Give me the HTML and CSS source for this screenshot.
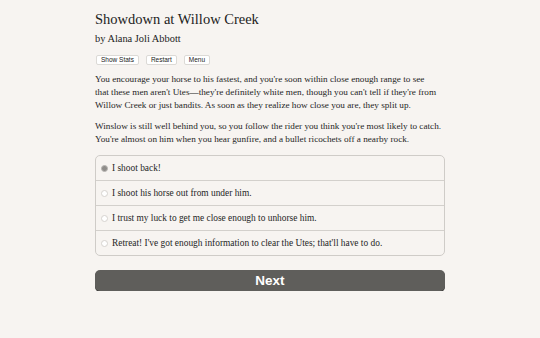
FILE: index.html
```html
<!DOCTYPE html>
<html>
<head>
<meta charset="utf-8">
<link rel="stylesheet" href="styles.css">
</head>
<body>
<main class="page">
  <h1 class="title">Showdown at Willow Creek</h1>
  <h2 class="author">by Alana Joli Abbott</h2>
  <div class="toolbar">
    <button class="tool">Show Stats</button>
    <button class="tool">Restart</button>
    <button class="tool">Menu</button>
  </div>
  <p class="para">You encourage your horse to his fastest, and you're soon within close enough range to see<br>that these men aren't Utes—they're definitely white men, though you can't tell if they're from<br>Willow Creek or just bandits. As soon as they realize how close you are, they split up.</p>
  <p class="para">Winslow is still well behind you, so you follow the rider you think you're most likely to catch.<br>You're almost on him when you hear gunfire, and a bullet ricochets off a nearby rock.</p>
  <div class="choices">
    <label class="choice"><span class="radio checked"></span>I shoot back!</label>
    <label class="choice"><span class="radio"></span>I shoot his horse out from under him.</label>
    <label class="choice"><span class="radio"></span>I trust my luck to get me close enough to unhorse him.</label>
    <label class="choice"><span class="radio"></span>Retreat! I've got enough information to clear the Utes; that'll have to do.</label>
  </div>
  <button class="next">Next</button>
</main>
</body>
</html>
```
FILE: styles.css
```css
html, body {
  margin: 0;
  padding: 0;
  background: #f7f4f1;
}
body {
  font-family: "Liberation Serif", "Times New Roman", serif;
  color: #2b2b2b;
}
.page {
  width: 350px;
  margin: 0 auto;
  padding-top: 9px;
}
.title {
  margin: 0;
  font-weight: normal;
  font-size: 14.5px;
  line-height: 20px;
  color: #222;
}
.author {
  margin: 2px 0 0;
  font-weight: normal;
  font-size: 10.4px;
  line-height: 16px;
  color: #222;
}
.toolbar {
  display: flex;
  gap: 7px;
  margin-top: 8px;
  padding-left: 1px;
}
.tool {
  font-family: "Liberation Sans", Arial, sans-serif;
  font-size: 6.5px;
  line-height: 8px;
  padding: 0 4px;
  background: #fff;
  border: 1px solid #dcdad6;
  border-radius: 2px;
  color: #222;
}
.para {
  margin: 8px 0 0;
  font-size: 9.2px;
  line-height: 13px;
  color: #262626;
  white-space: nowrap;
}
.para + .para {
  margin-top: 8px;
}
.choices {
  margin-top: 9px;
  border: 1px solid #cfccc8;
  border-radius: 5px;
  display: flex;
  flex-direction: column;
}
.choice {
  display: flex;
  align-items: center;
  height: 24px;
  padding-left: 5px;
  font-size: 9.4px;
  color: #262626;
}
.choice + .choice {
  border-top: 1px solid #d3d0cc;
}
.radio {
  width: 7px;
  height: 7px;
  border-radius: 50%;
  border: 1px solid #d6d3cf;
  background: #fff;
  box-sizing: border-box;
  margin-right: 4px;
  flex: none;
}
.radio.checked {
  background: #8f8d8a;
  border: 1.5px solid #b8b6b3;
}
.next {
  display: block;
  width: 100%;
  margin-top: 14px;
  height: 21px;
  background: #5f5e5b;
  border: none;
  border-radius: 5px;
  box-shadow: 0 1px 0 #3f3e3c;
  color: #fff;
  font-family: "Liberation Sans", Arial, sans-serif;
  font-weight: bold;
  font-size: 13.5px;
  padding: 0;
}
```
